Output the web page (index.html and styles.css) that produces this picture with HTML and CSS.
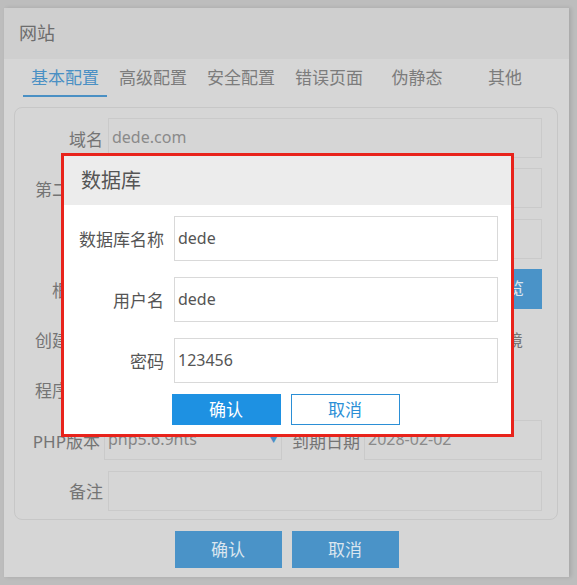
FILE: index.html
```html
<!DOCTYPE html>
<html>
<head>
    <meta charset="utf-8">
    <title>网站</title>
    <link rel="stylesheet" href="styles.css">
</head>
<body>

<div class="window">
    <div class="window-head">网站</div>
    <div class="tabs">
        <div class="tab active">基本配置</div>
        <div class="tab">高级配置</div>
        <div class="tab">安全配置</div>
        <div class="tab">错误页面</div>
        <div class="tab">伪静态</div>
        <div class="tab">其他</div>
    </div>

    <div class="panel">
        <div class="row">
            <div class="lbl">域名</div>
            <div class="field">dede.com</div>
        </div>
        <div class="row">
            <div class="lbl">第二域名</div>
            <div class="field"></div>
        </div>
        <div class="row">
            <div class="lbl"></div>
            <div class="field"></div>
        </div>
        <div class="row">
            <div class="lbl">根目录</div>
            <div class="field"></div>
            <div class="btn btn-browse">浏览</div>
        </div>
        <div class="row">
            <div class="lbl">创建数据</div>
            <div class="plain">独立运行环境</div>
        </div>
        <div class="row">
            <div class="lbl">程序类型</div>
            <div class="plain"></div>
        </div>
        <div class="row">
            <div class="lbl lbl-php">PHP版本</div>
            <div class="field select">php5.6.9nts<span class="arrow">▼</span></div>
            <div class="lbl lbl-inline">到期日期</div>
            <div class="field">2028-02-02</div>
        </div>
        <div class="row">
            <div class="lbl">备注</div>
            <div class="field"></div>
        </div>
    </div>

    <div class="actions">
        <div class="btn">确认</div>
        <div class="btn">取消</div>
    </div>
</div>

<div class="modal">
    <div class="modal-head">数据库</div>
    <div class="modal-body">
        <div class="mrow">
            <div class="mlbl">数据库名称</div>
            <div class="minput">dede</div>
        </div>
        <div class="mrow">
            <div class="mlbl">用户名</div>
            <div class="minput">dede</div>
        </div>
        <div class="mrow">
            <div class="mlbl">密码</div>
            <div class="minput">123456</div>
        </div>
        <div class="mactions">
            <div class="mbtn primary">确认</div>
            <div class="mbtn">取消</div>
        </div>
    </div>
</div>

</body>
</html>
```

FILE: styles.css
```css
body {
    margin: 0;
    padding: 8px 8px 8px 4px;
    background: #bdbdbd;
    font-family: "Noto Sans", "Noto Sans CJK SC", sans-serif;
    font-size: 17px;
    position: relative;
}

/* the site window, shaded behind the database dialog */
.window {
    width: 565px;
    height: 569px;
    background: #d6d6d6;
    box-shadow: 2px 0 4px rgba(0, 0, 0, 0.12);
    display: flex;
    flex-direction: column;
}

.window-head {
    height: 51px;
    line-height: 51px;
    padding-left: 15px;
    background: #cfcfcf;
    color: #6d6d6d;
    font-size: 18px;
}

.tabs {
    display: flex;
    padding-left: 17px;
    height: 38px;
}

.tab {
    width: 84px;
    margin: 0 2px;
    text-align: center;
    line-height: 38px;
    color: #7c7c7c;
    border-bottom: 2px solid transparent;
}

.tab.active {
    color: #4a90c4;
    border-bottom-color: #4a90c4;
}

.panel {
    margin: 10px 11px 0 10px;
    height: 401px;
    border: 1px solid #c7c7c7;
    border-radius: 8px;
    padding: 10px 15px 0 0;
    display: flex;
    flex-direction: column;
    gap: 10.4px;
}

.row {
    display: flex;
    align-items: center;
    height: 40px;
    flex: none;
}

.lbl {
    width: 88px;
    flex: none;
    text-align: right;
    color: #747474;
    margin-right: 5px;
}

.lbl-php {
    width: 85px;
    margin-right: 6px;
}

.lbl-inline {
    width: auto;
    margin: 0 4px 0 10px;
}

.field {
    flex: 1;
    height: 38px;
    line-height: 36px;
    border: 1px solid #cacaca;
    padding-left: 3px;
    color: #8a8a8a;
    font-size: 16px;
}

.plain {
    flex: 1;
    text-align: right;
    padding-right: 19px;
    color: #747474;
}

.select {
    flex: none;
    width: 173px;
    position: relative;
    margin-left: -2px;
    color: #858585;
}

.select .arrow {
    position: absolute;
    right: 2px;
    top: 0;
    font-size: 11px;
    color: #4a8fc6;
}

.btn {
    background: #4a93c8;
    color: #dbe6ef;
    text-align: center;
}

.btn-browse {
    width: 70px;
    height: 40px;
    line-height: 40px;
    margin-left: -37px;
}

.actions {
    display: flex;
    justify-content: center;
    gap: 10px;
    margin-top: 11px;
}

.actions .btn {
    width: 107px;
    height: 37px;
    line-height: 37px;
}

/* database dialog */
.modal {
    position: absolute;
    left: 61px;
    top: 153px;
    width: 447px;
    border: 3px solid #e8231b;
    background: #fff;
}

.modal-head {
    height: 49px;
    line-height: 49px;
    padding-left: 17px;
    background: #ececec;
    color: #555;
    font-size: 20px;
}

.modal-body {
    padding: 11px 13px 9px 0;
    display: flex;
    flex-direction: column;
    gap: 16px;
}

.mrow {
    display: flex;
    align-items: center;
}

.mlbl {
    width: 100px;
    margin-right: 10px;
    text-align: right;
    color: #555;
}

.minput {
    flex: 1;
    height: 43px;
    line-height: 43px;
    border: 1px solid #d9d9d9;
    padding-left: 3px;
    color: #555;
    font-size: 16px;
}

.mactions {
    display: flex;
    justify-content: center;
    gap: 10px;
    margin: -5px -9px 0 0;
}

.mbtn {
    width: 107px;
    height: 29px;
    line-height: 29px;
    text-align: center;
    border: 1px solid #2b8fd6;
    color: #2b8fd6;
    background: #fff;
}

.mbtn.primary {
    background: #1e91e2;
    border-color: #1e91e2;
    color: #fff;
}
```
